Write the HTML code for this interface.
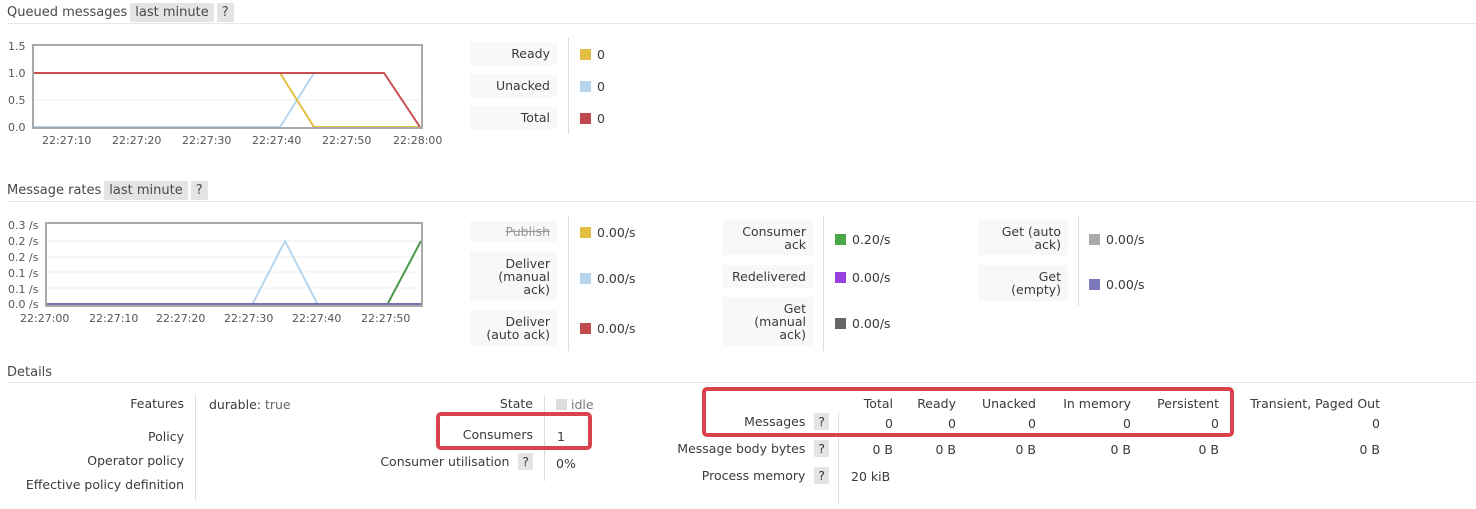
<!DOCTYPE html>
<html><head><meta charset="utf-8"><style>
body{margin:0;width:1476px;height:509px;background:#fff;font-family:"DejaVu Sans","Liberation Sans",sans-serif;font-size:12.5px;color:#3a3a3a;position:relative;overflow:hidden}
.a{position:absolute;white-space:nowrap}
.h{position:absolute;left:7px;font-size:13px;color:#484848}
.tag{background:#e4e4e4;padding:2px 5px;margin-left:3px}
.hr{position:absolute;left:7px;right:0;height:1px;background:#e6e6e6}
.lb{position:absolute;background:#f8f8f8;text-align:right;padding-right:7px;box-sizing:border-box;color:#3a3a3a;line-height:13px;display:flex;flex-direction:column;justify-content:center}
.sw{display:inline-block;width:11px;height:11px;margin-right:6px;vertical-align:-1px}
.vl{position:absolute;width:1px;background:#ddd}
.r{text-align:right}
.q{background:#e4e4e4;padding:1px 4px;margin-left:5px}
.red{position:absolute;border:4px solid #d9434a;border-radius:5px;box-sizing:border-box}
</style></head><body>

<div class="h" style="top:5px">Queued messages<span class="tag">last minute</span><span class="tag">?</span></div>
<div class="hr" style="top:23px"></div>

<svg class="a" style="left:0;top:35px" width="460" height="120">
<g font-size="11" fill="#555" font-family="DejaVu Sans,sans-serif">
<text x="8" y="15">1.5</text><text x="8" y="42">1.0</text><text x="8" y="69">0.5</text><text x="8" y="96">0.0</text>
<text x="42" y="109">22:27:10</text><text x="112" y="109">22:27:20</text><text x="182" y="109">22:27:30</text><text x="252" y="109">22:27:40</text><text x="322" y="109">22:27:50</text><text x="393" y="109">22:28:00</text></g>
<line x1="34" y1="65" x2="420" y2="65" stroke="#eee"/>
<polyline points="34,92 280,92 314,38" fill="none" stroke="#b5d6ee" stroke-width="2"/>
<polyline points="34,38 280,38 314,92 420,92" fill="none" stroke="#e3be44" stroke-width="2"/>
<polyline points="34,38 384,38 420,92" fill="none" stroke="#c6504e" stroke-width="2"/>
<rect x="33" y="10" width="389" height="83" fill="none" stroke="#aaa" stroke-width="2"/>
</svg>

<div class="lb" style="left:470px;top:42px;width:87px;height:23px">Ready</div>
<div class="lb" style="left:470px;top:74px;width:87px;height:23px">Unacked</div>
<div class="lb" style="left:470px;top:106px;width:87px;height:23px">Total</div>
<div class="vl" style="left:568px;top:38px;height:96px"></div>
<div class="a" style="left:580px;top:47px"><span class="sw" style="background:#e3be44"></span>0</div>
<div class="a" style="left:580px;top:79px"><span class="sw" style="background:#b5d6ee"></span>0</div>
<div class="a" style="left:580px;top:111px"><span class="sw" style="background:#c04a4e"></span>0</div>

<div class="h" style="top:183px">Message rates<span class="tag">last minute</span><span class="tag">?</span></div>
<div class="hr" style="top:201px"></div>

<svg class="a" style="left:0;top:215px" width="460" height="115">
<g font-size="11" fill="#555" font-family="DejaVu Sans,sans-serif">
<text x="8" y="14">0.3 /s</text><text x="8" y="30">0.2 /s</text><text x="8" y="46">0.2 /s</text><text x="8" y="62">0.1 /s</text><text x="8" y="78">0.1 /s</text><text x="8" y="93">0.0 /s</text>
<text x="20" y="107">22:27:00</text><text x="89" y="107">22:27:10</text><text x="156" y="107">22:27:20</text><text x="224" y="107">22:27:30</text><text x="292" y="107">22:27:40</text><text x="361" y="107">22:27:50</text></g>
<g stroke="#eee"><line x1="47" y1="26" x2="420" y2="26"/><line x1="47" y1="42" x2="420" y2="42"/><line x1="47" y1="57" x2="420" y2="57"/><line x1="47" y1="73" x2="420" y2="73"/></g>
<polyline points="252,90 285,26 318,90" fill="none" stroke="#b5d6ee" stroke-width="2"/>
<polyline points="387,90 421,26" fill="none" stroke="#4a9a4a" stroke-width="2"/>
<line x1="47" y1="89.5" x2="421" y2="89.5" stroke="#7b6fb0" stroke-width="3"/>
<rect x="46" y="8" width="376" height="83" fill="none" stroke="#aaa" stroke-width="2"/>
</svg>

<div class="lb" style="left:470px;top:221px;width:87px;height:21px;color:#999;text-decoration:line-through">Publish</div>
<div class="lb" style="left:470px;top:252px;width:87px;height:48px">Deliver<br>(manual<br>ack)</div>
<div class="lb" style="left:470px;top:310px;width:87px;height:36px">Deliver<br>(auto ack)</div>
<div class="vl" style="left:568px;top:216px;height:135px"></div>
<div class="a" style="left:580px;top:225px"><span class="sw" style="background:#e3be44"></span>0.00/s</div>
<div class="a" style="left:580px;top:271px"><span class="sw" style="background:#b5d6ee"></span>0.00/s</div>
<div class="a" style="left:580px;top:321px"><span class="sw" style="background:#c04a4e"></span>0.00/s</div>

<div class="lb" style="left:723px;top:220px;width:90px;height:35px">Consumer<br>ack</div>
<div class="lb" style="left:723px;top:265px;width:90px;height:23px">Redelivered</div>
<div class="lb" style="left:723px;top:297px;width:90px;height:49px">Get<br>(manual<br>ack)</div>
<div class="vl" style="left:823px;top:216px;height:135px"></div>
<div class="a" style="left:835px;top:232px"><span class="sw" style="background:#4aa74a"></span>0.20/s</div>
<div class="a" style="left:835px;top:270px"><span class="sw" style="background:#9940e0"></span>0.00/s</div>
<div class="a" style="left:835px;top:316px"><span class="sw" style="background:#666"></span>0.00/s</div>

<div class="lb" style="left:978px;top:220px;width:90px;height:35px">Get (auto<br>ack)</div>
<div class="lb" style="left:978px;top:265px;width:90px;height:36px">Get<br>(empty)</div>
<div class="vl" style="left:1078px;top:216px;height:90px"></div>
<div class="a" style="left:1089px;top:232px"><span class="sw" style="background:#aaa"></span>0.00/s</div>
<div class="a" style="left:1089px;top:277px"><span class="sw" style="background:#7b78be"></span>0.00/s</div>

<div class="h" style="top:365px">Details</div>
<div class="hr" style="top:382px"></div>

<div class="a r" style="right:1292px;top:396px">Features</div>
<div class="a r" style="right:1292px;top:429px">Policy</div>
<div class="a r" style="right:1292px;top:453px">Operator policy</div>
<div class="a r" style="right:1292px;top:477px">Effective policy definition</div>
<div class="vl" style="left:195px;top:395px;height:105px"></div>
<div class="a" style="left:209px;top:397px">durable: <span style="color:#666">true</span></div>

<div class="a r" style="right:943px;top:396px">State</div>
<div class="a r" style="right:943px;top:427px">Consumers</div>
<div class="a r" style="right:943px;top:454px">Consumer utilisation <span class="q">?</span></div>
<div class="vl" style="left:544px;top:395px;height:86px"></div>
<div class="a" style="left:556px;top:397px;color:#777"><span class="sw" style="background:#ddd;margin-right:4px"></span>idle</div>
<div class="a" style="left:557px;top:429px">1</div>
<div class="a" style="left:556px;top:456px">0%</div>
<div class="red" style="left:436px;top:412px;width:156px;height:38px"></div>

<div class="a r" style="right:647px;top:414px">Messages <span class="q">?</span></div>
<div class="a r" style="right:647px;top:441px">Message body bytes <span class="q">?</span></div>
<div class="a r" style="right:647px;top:468px">Process memory <span class="q">?</span></div>
<div class="vl" style="left:838px;top:413px;height:90px"></div>
<div class="a r" style="right:583px;top:396px">Total</div><div class="a r" style="right:520px;top:396px">Ready</div><div class="a r" style="right:440px;top:396px">Unacked</div><div class="a r" style="right:345px;top:396px">In memory</div><div class="a r" style="right:257px;top:396px">Persistent</div><div class="a r" style="right:96px;top:396px">Transient, Paged Out</div>
<div class="a r" style="right:583px;top:416px">0</div><div class="a r" style="right:520px;top:416px">0</div><div class="a r" style="right:440px;top:416px">0</div><div class="a r" style="right:345px;top:416px">0</div><div class="a r" style="right:257px;top:416px">0</div><div class="a r" style="right:96px;top:416px">0</div>
<div class="a r" style="right:583px;top:442px">0 B</div><div class="a r" style="right:520px;top:442px">0 B</div><div class="a r" style="right:440px;top:442px">0 B</div><div class="a r" style="right:345px;top:442px">0 B</div><div class="a r" style="right:257px;top:442px">0 B</div><div class="a r" style="right:96px;top:442px">0 B</div>
<div class="a" style="left:851px;top:469px">20 kiB</div>
<div class="red" style="left:702px;top:387px;width:532px;height:50px"></div>
</body></html>
